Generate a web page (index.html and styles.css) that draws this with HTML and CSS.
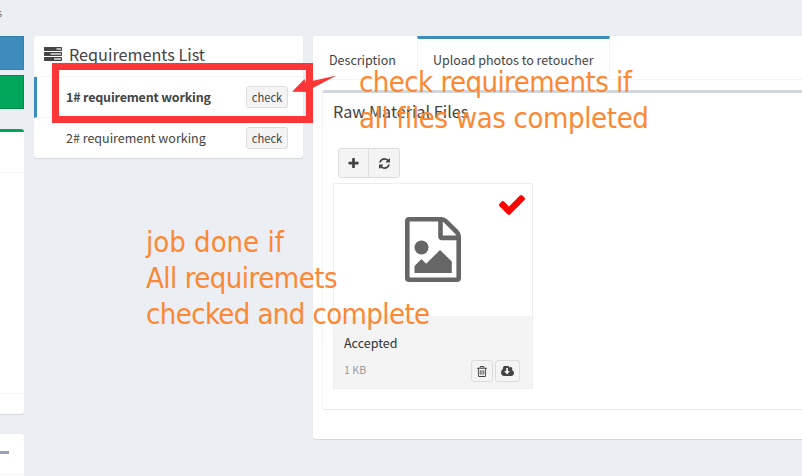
FILE: index.html
```html
<!DOCTYPE html>
<html lang="en">
<head>
<meta charset="utf-8">
<title>Requirements</title>
<link rel="stylesheet" href="styles.css">
</head>
<body>
<div class="crumb">s</div>
<main class="columns">
  <aside class="side">
    <div class="action action-blue"></div>
    <div class="action action-green"></div>
    <section class="side-box">
      <div class="side-head"></div>
      <div class="side-body"></div>
      <div class="side-foot"></div>
    </section>
    <section class="side-box-next"><div class="next-head"><i class="minus"></i></div></section>
  </aside>

  <section class="list">
    <h3 class="list-head">
      <svg width="18" height="14" viewBox="0 0 18 14"><path fill="#444" d="M.5 0h17l.5.5v3l-.5.5H.5L0 3.500v-3zM.5 5h17l.5.5v3l-.5.5H.5L0 8.500v-3zM.5 10h17l.5.5v3l-.5.5H.5L0 13.500v-3z"/><path fill="#ddd" d="M12.500 1.200H17v1.600h-4.500zM6.500 6.200H17v1.600H6.500zM10 11.200h7v1.600h-7z"/></svg>
      <span>Requirements List</span>
    </h3>
    <div class="item item-active"><span class="item-name">1# requirement working</span><button class="check">check</button></div>
    <div class="item"><span class="item-name">2# requirement working</span><button class="check">check</button></div>
  </section>

  <section class="panel">
    <nav class="tabs">
      <div class="tab"><span>Description</span></div>
      <div class="tab tab-active"><span>Upload photos to retoucher</span></div>
    </nav>
    <div class="files">
      <h3 class="files-title"><span>Raw Material Files</span></h3>
      <div class="tools">
        <button class="tool"><svg width="11" height="11" viewBox="128 128 1536 1536"><path fill="#444" d="M1600 736v192q0 40-28 68t-68 28h-416v416q0 40-28 68t-68 28h-192q-40 0-68-28t-28-68v-416h-416q-40 0-68-28t-28-68v-192q0-40 28-68t68-28h416v-416q0-40 28-68t68-28h192q40 0 68 28t28 68v416h416q40 0 68 28t28 68z"/></svg></button>
        <button class="tool"><svg width="11" height="11" viewBox="128 128 1536 1536"><path fill="#444" d="M1639 1056q0 5-1 7-64 268-268 434.500t-478 166.500q-146 0-282.500-55t-243.500-157l-129 129q-19 19-45 19t-45-19-19-45v-448q0-26 19-45t45-19h448q26 0 45 19t19 45-19 45l-137 137q71 66 161 102t187 36q134 0 250-65t186-179q11-17 53-117 8-23 30-23h192q13 0 22.500 9.500t9.500 22.500zm25-800v448q0 26-19 45t-45 19h-448q-26 0-45-19t-19-45 19-45l138-138q-148-137-349-137-134 0-250 65t-186 179q-11 17-53 117-8 23-30 23h-199q-13 0-22.500-9.500t-9.500-22.500v-7q65-268 270-434.500t480-166.500q146 0 284 55.500t245 156.500l130-129q19-19 45-19t45 19 19 45z"/></svg></button>
      </div>
      <article class="card">
        <div class="preview">
          <svg width="56" height="65" viewBox="0 0 56 65"><path fill="none" stroke="#666" stroke-width="4.600" stroke-linejoin="round" d="M4 2.300H36.500Q39 2.300 41 4.300L51.700 15Q53.700 17 53.700 19.500V61Q53.700 62.700 52 62.700H4Q2.300 62.700 2.300 61V4Q2.300 2.300 4 2.300zM35.500 3V19.500Q35.500 20.900 37 20.900H53"/><circle cx="16.500" cy="30.500" r="7" fill="#666"/><path fill="#666" d="M9.500 56V49L16.500 42l4.700 4.700L35 33 46.800 44.500V56z"/></svg>
          <svg class="tick" width="26" height="20" viewBox="121 334 1550 1188" preserveAspectRatio="none"><path fill="red" d="M1671 566q0 40-28 68l-724 724-136 136q-28 28-68 28t-68-28l-136-136-362-362q-28-28-28-68t28-68l136-136q28-28 68-28t68 28l294 295 656-657q28-28 68-28t68 28l136 136q28 28 28 68z"/></svg>
        </div>
        <footer class="card-foot">
          <div class="status">Accepted</div>
          <div class="meta"><span class="size">1 KB</span>
            <button class="mini mini-trash"><svg width="10" height="11" viewBox="192 128 1408 1536"><path fill="#444" d="M704 736v576q0 14-9 23t-23 9h-64q-14 0-23-9t-9-23v-576q0-14 9-23t23-9h64q14 0 23 9t9 23zm256 0v576q0 14-9 23t-23 9h-64q-14 0-23-9t-9-23v-576q0-14 9-23t23-9h64q14 0 23 9t9 23zm256 0v576q0 14-9 23t-23 9h-64q-14 0-23-9t-9-23v-576q0-14 9-23t23-9h64q14 0 23 9t9 23zm128 724v-948h-896v948q0 22 7 40.500t14.500 27 10.500 8.500h832q3 0 10.500-8.500t14.500-27 7-40.500zm-672-1076h448l-48-117q-7-9-17-11h-317q-10 2-17 11zm928 32v64q0 14-9 23t-23 9h-96v948q0 83-47 143.500t-113 60.500h-832q-66 0-113-58.500t-47-141.500v-952h-96q-14 0-23-9t-9-23v-64q0-14 9-23t23-9h309l70-167q15-37 54-63t79-26h320q40 0 79 26t54 63l70 167h309q14 0 23 9t9 23z"/></svg></button>
            <button class="mini"><svg width="13" height="10" viewBox="-64 256 1920 1280" preserveAspectRatio="none"><path fill="#444" d="M1216 928q0-14-9-23t-23-9h-224v-352q0-13-9.500-22.500t-22.500-9.500h-192q-13 0-22.500 9.500t-9.500 22.500v352h-224q-13 0-22.500 9.500t-9.500 22.500q0 14 9 23l352 352q9 9 23 9t23-9l351-351q10-12 10-24zm640 224q0 159-112.500 271.500t-271.500 112.500h-1088q-185 0-316.500-131.500t-131.500-316.500q0-130 70-240t188-165q-2-30-2-43 0-212 150-362t362-150q156 0 285.500 87t188.500 231q71-62 166-62 106 0 181 75t75 181q0 76-41 138 130 31 213.500 135.500t83.500 238.500z"/></svg></button>
          </div>
        </footer>
      </article>
    </div>
  </section>
</main>

<div class="frame"></div>
<svg class="arrow" width="45" height="20" viewBox="0 0 45 20"><path fill="#fc3636" d="M0 15.800L12.500 3 13.500 6.500 44.500-.5 19 13 21 16z"/></svg>
<div class="note note-top"><span class="n1">check requirements if</span><br><span class="n2">all files was completed</span></div>
<div class="note note-bottom"><span class="n3">job done if</span><br><span class="n4">All requiremets</span><br><span class="n5">checked and complete</span></div>
</body>
</html>
```

FILE: styles.css
```css
* { box-sizing: border-box; }
body {
  margin: 0;
  width: 802px;
  height: 476px;
  overflow: hidden;
  position: relative;
  background: #ebeff4;
  color: #444;
  font: 12.500px/20px "Noto Sans CJK SC", "Open Sans", sans-serif;
}
svg { display: block; flex: none; }
button { font-family: inherit; color: #444; background: #f4f4f4; border: 1px solid #ddd; padding: 0; display: flex; align-items: center; justify-content: center; }
h3 { margin: 0; font-weight: 400; }

.crumb { height: 36px; padding-top: 2px; margin-left: -3px; font-size: 11px; color: #777; }
.columns { display: grid; grid-template-columns: 24px 269px 510px; column-gap: 10px; align-items: start; }

.action { height: 34px; margin-bottom: 5px; border: 1px solid #367fa9; border-left: 0; background: #3c8dbc; }
.action-green { border-color: #008d4c; background: #00a65a; margin-bottom: 20px; }
.side-box { height: 285px; display: flex; flex-direction: column; background: #fff; border-top: 3px solid #00a65a; border-radius: 0 3px 3px 0; box-shadow: 0 1px 1px rgba(0,0,0,.1); }
.side-head { height: 41px; border-bottom: 1px solid #f4f4f4; }
.side-body { flex: 1; }
.side-foot { height: 21px; border-top: 1px solid #f4f4f4; }
.side-box-next { margin-top: 20px; height: 60px; background: #fff; border-radius: 0 3px 0 0; box-shadow: 0 1px 1px rgba(0,0,0,.1); }
.next-head { height: 41px; padding-top: 17px; border-bottom: 1px solid #f4f4f4; }
.minus { display: block; width: 9px; height: 3px; background: #97a0b3; }

.list { height: 122px; background: #fff; border-radius: 3px; box-shadow: 0 1px 1px rgba(0,0,0,.1); }
.list-head { height: 41px; display: flex; align-items: center; gap: 7px; padding: 0 0 4px 10px; border-bottom: 1px solid #f4f4f4; font-size: 16.200px; }
.item { height: 41px; display: flex; align-items: center; justify-content: space-between; padding: 0 15px 0 29px; border-left: 3px solid transparent; border-bottom: 1px solid #f4f4f4; }
.item:last-child { height: 40px; border-bottom: 0; }
.item-active { border-left-color: #3c8dbc; font-weight: 700; }
.item-active .item-name { letter-spacing: -.18px; }
.check { width: 42px; height: 22px; border-radius: 3px; font-size: 11.200px; line-height: 18px; }

.panel { height: 403px; background: #fff; border-radius: 3px; box-shadow: 0 1px 1px rgba(0,0,0,.1); }
.tabs { height: 44px; display: flex; border-bottom: 1px solid #f4f4f4; }
.tab { width: 104px; height: 44px; padding: 14px 0 0 16px; white-space: nowrap; }
.tab-active { width: 193px; padding: 11px 0 0 15px; background: #fff; border: 1px solid #f4f4f4; border-top: 3px solid #3c8dbc; border-bottom: 0; }
.files { margin: 10px 0 0 9px; height: 319px; padding: 0 0 0 11px; border-top: 3px solid #d2d6de; border-left: 1px solid #f4f4f4; border-radius: 3px 0 0 3px; box-shadow: 0 1px 1px rgba(0,0,0,.1); }
.files-title { height: 55px; padding-top: 8px; margin-left: -1px; font-size: 16.200px; }
.tools { display: flex; margin-left: 4px; }
.tool { width: 31px; height: 30px; border-radius: 3px 0 0 3px; }
.tool + .tool { width: 32px; margin-left: -1px; border-radius: 0 3px 3px 0; }
.card { width: 200px; height: 206px; margin: 5px 0 0 -1px; border: 1px solid #eee; }
.preview { position: relative; height: 132px; display: flex; justify-content: center; padding: 33px 1px 0 0; }
.tick { position: absolute; right: 7px; top: 11px; }
.card-foot { height: 72px; padding: 17px 12px 0 10px; background: #f4f4f4; }
.status { color: #333; }
.meta { display: flex; align-items: center; gap: 2px; margin-top: 7px; }
.size { flex: 1; padding-bottom: 2px; color: #999; font-size: 10.700px; }
.mini { width: 25px; height: 22px; border-radius: 3px; }
.mini-trash { width: 22px; }

.frame { position: absolute; left: 52px; top: 63px; width: 261px; height: 60px; border: 7px solid #fc3636; }
.arrow { position: absolute; left: 292px; top: 76px; }
.note { position: absolute; font: 29px/36px "DejaVu Sans Condensed", "DejaVu Sans", sans-serif; font-stretch: condensed; color: #fc8833; white-space: nowrap; }
.note-top { left: 359px; top: 64px; }
.note-bottom { left: 146px; top: 224px; }
.n1 { letter-spacing: -.55px; }
.n2 { letter-spacing: -.37px; }
.n4 { letter-spacing: -.5px; }
.n5 { letter-spacing: -.6px; }
```
